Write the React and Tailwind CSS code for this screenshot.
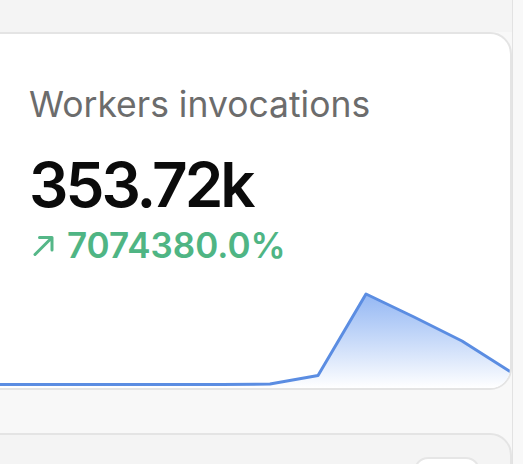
import React from "react";

// Sparkline points in page coordinates (x, y)
const points = [
  [-18, 386.5],
  [30, 386.5],
  [78, 386.5],
  [126, 386.5],
  [174, 386.5],
  [222, 386.5],
  [270, 386],
  [318, 377.5],
  [366, 296],
  [414, 319],
  [462, 343],
  [514, 376],
];

function Sparkline() {
  const line = points.map(([x, y], i) => `${i === 0 ? "M" : "L"}${x} ${y}`).join(" ");
  const area = `${line} L514 390 L-18 390 Z`;
  return (
    <svg width="529" height="102" viewBox="-18 288 529 102" className="block">
      <defs>
        <linearGradient id="sparkFill" x1="0" y1="0" x2="0" y2="1">
          <stop offset="0%" stopColor="#8fb4f3" stopOpacity="0.95" />
          <stop offset="100%" stopColor="#ffffff" stopOpacity="1" />
        </linearGradient>
      </defs>
      <path d={area} fill="url(#sparkFill)" />
      <path d={line} fill="none" stroke="#5b8de2" strokeWidth="3" strokeLinejoin="round" strokeLinecap="round" />
    </svg>
  );
}

function TrendArrow() {
  return (
    <svg width="24" height="24" viewBox="0 0 24 24" className="shrink-0">
      <path d="M3 21.5 L19.5 5 M7.5 4.5 H20 V17" fill="none" stroke="#55b788" strokeWidth="3" strokeLinecap="round" strokeLinejoin="round" />
    </svg>
  );
}

export default function App() {
  return (
    <div className="w-[523px] h-[464px] overflow-hidden bg-[#f8f8f8] flex" style={{ fontFamily: "Inter, 'Liberation Sans', sans-serif" }}>
      <div className="w-[513px] shrink-0 flex flex-col border-r border-[#e2e2e2]">
        <div className="h-[32px] shrink-0 bg-[#f4f4f4]" />
        <div className="-ml-[20px] w-[532px] h-[358px] shrink-0 flex flex-col bg-white border-2 border-[#e4e4e4] rounded-[22px] overflow-hidden">
          <div className="pl-[47px] pt-[53px]">
            <div className="text-[35.5px] leading-none text-[#6c6c6c] whitespace-nowrap">Workers invocations</div>
            <div className="mt-[31px] text-[62px] leading-none font-semibold text-[#0b0b0b] tracking-[-3px]">353.72k</div>
            <div className="mt-[12px] flex items-center gap-[11px] text-[35px] leading-none font-semibold text-[#4fb584]">
              <span className="pl-[3px]">
                <TrendArrow />
              </span>
              <span>7074380.0%</span>
            </div>
          </div>
          <div className="mt-auto">
            <Sparkline />
          </div>
        </div>
        <div className="h-[43px] shrink-0" />
        <div className="-ml-[20px] w-[532px] h-[120px] shrink-0 bg-[#f4f4f4] border-2 border-[#e4e4e4] rounded-[22px] flex justify-end pt-[22px] pr-[30px]">
          <div className="w-[66px] h-[44px] bg-white border-2 border-[#e6e6e6] rounded-[14px]" />
        </div>
      </div>
    </div>
  );
}
